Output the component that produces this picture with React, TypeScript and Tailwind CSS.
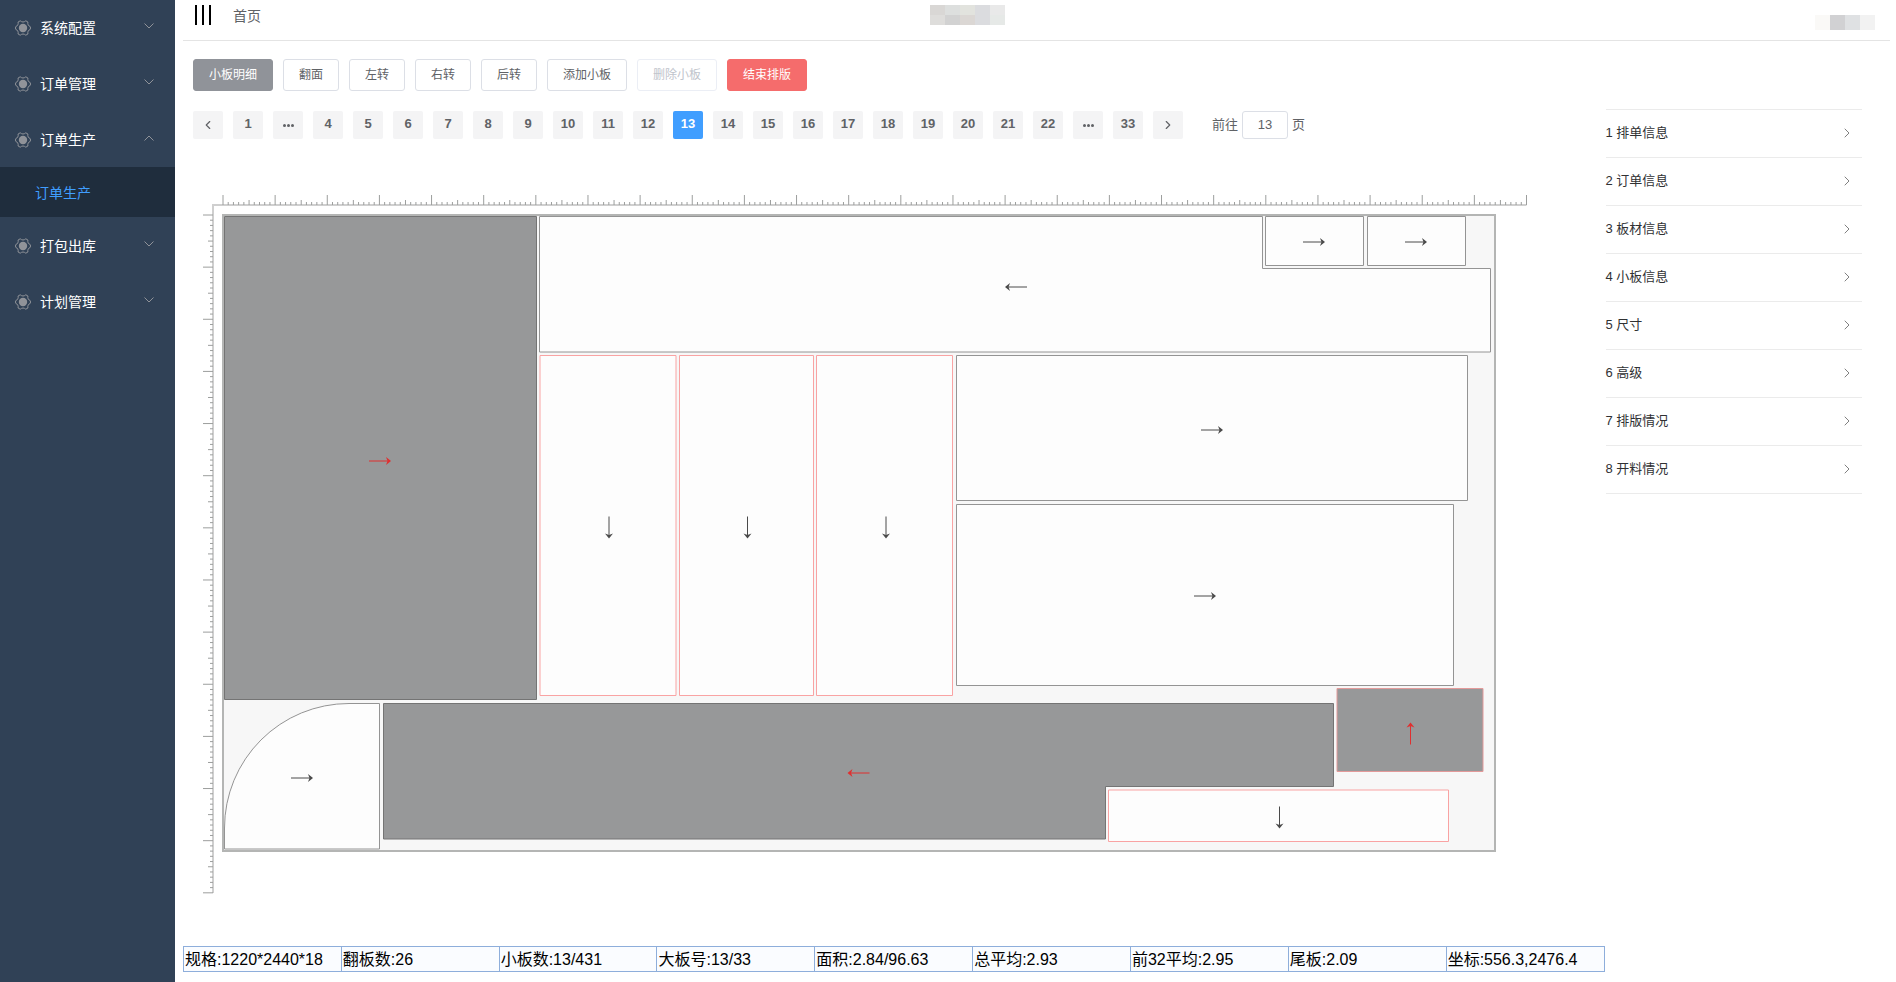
import React from 'react';
import { ChevronLeft, ChevronRight } from 'lucide-react';

const menus = [
  { name: '系统配置' },
  { name: '订单管理' },
  { name: '订单生产', open: true, children: ['订单生产'] },
  { name: '打包出库' },
  { name: '计划管理' },
];

const tools = [
  { name: '小板明细', style: 'bg-[#909399] border-[#909399] text-white' },
  { name: '翻面', style: 'bg-white border-[#dcdfe6] text-[#606266]' },
  { name: '左转', style: 'bg-white border-[#dcdfe6] text-[#606266]' },
  { name: '右转', style: 'bg-white border-[#dcdfe6] text-[#606266]' },
  { name: '后转', style: 'bg-white border-[#dcdfe6] text-[#606266]' },
  { name: '添加小板', style: 'bg-white border-[#dcdfe6] text-[#606266]' },
  { name: '删除小板', style: 'bg-white border-[#ebeef5] text-[#c0c4cc]', disabled: true },
  { name: '结束排版', style: 'bg-[#f56c6c] border-[#f56c6c] text-white' },
];

const pages = ['1', '...', '4', '5', '6', '7', '8', '9', '10', '11', '12', '13', '14', '15', '16', '17', '18', '19', '20', '21', '22', '...', '33'];

const sections = ['1 排单信息', '2 订单信息', '3 板材信息', '4 小板信息', '5 尺寸', '6 高级', '7 排版情况', '8 开料情况'];

const status = [
  '规格:1220*2440*18',
  '翻板数:26',
  '小板数:13/431',
  '大板号:13/33',
  '面积:2.84/96.63',
  '总平均:2.93',
  '前32平均:2.95',
  '尾板:2.09',
  '坐标:556.3,2476.4',
];

const titleTiles = [
  'bg-[#d9d7d5]', 'bg-[#dddfde]', 'bg-[#e2e3de]', 'bg-[#dbdcdf]', 'bg-[#e9e9e9]',
  'bg-[#dedddb]', 'bg-[#d2d2d2]', 'bg-[#dbd7d4]', 'bg-[#dbdcdf]', 'bg-[#e6e9e7]',
];
const userTiles = ['bg-[#faf9f7]', 'bg-[#d1d1d3]', 'bg-[#dfe1e3]', 'bg-[#f2f2f2]'];

type Kind = 'plain' | 'red' | 'dark' | 'darkRed';

const kinds: Record<Kind, { fill: string; stroke: string; arrow: string }> = {
  plain: { fill: '#fdfdfd', stroke: '#949494', arrow: '#4a4a4a' },
  red: { fill: '#fdfdfd', stroke: '#f9a3a3', arrow: '#4a4a4a' },
  dark: { fill: '#979899', stroke: '#747474', arrow: '#e02f2f' },
  darkRed: { fill: '#979899', stroke: '#e39a9a', arrow: '#e02f2f' },
};

// d: outline, x / y: middle of the arrow, turn: its direction in degrees
const panels: { kind: Kind; d: string; x: number; y: number; turn: number }[] = [
  { kind: 'dark', d: 'M224.5 216.5H536.5V699.5H224.5Z', x: 380, y: 461, turn: 0 },
  { kind: 'plain', d: 'M539.5 216.5H1262.5V268.5H1490.5V352H539.5Z', x: 1016, y: 287, turn: 180 },
  { kind: 'plain', d: 'M1265.5 216.5H1363.5V265.5H1265.5Z', x: 1314, y: 242, turn: 0 },
  { kind: 'plain', d: 'M1367.5 216.5H1465.5V265.5H1367.5Z', x: 1416, y: 242, turn: 0 },
  { kind: 'red', d: 'M540 355.5H676V695.5H540Z', x: 609, y: 527.5, turn: 90 },
  { kind: 'red', d: 'M679.5 355.5H813.5V695.5H679.5Z', x: 747.5, y: 527.5, turn: 90 },
  { kind: 'red', d: 'M816.5 355.5H952.5V695.5H816.5Z', x: 886, y: 527.5, turn: 90 },
  { kind: 'plain', d: 'M956.5 355.5H1467.5V500.5H956.5Z', x: 1212, y: 430, turn: 0 },
  { kind: 'plain', d: 'M956.5 504.5H1453.5V685.5H956.5Z', x: 1205, y: 596, turn: 0 },
  { kind: 'darkRed', d: 'M1337 688.5H1483V771.5H1337Z', x: 1410.5, y: 733.5, turn: 270 },
  { kind: 'dark', d: 'M383.5 703.5H1333.5V786.5H1105.5V839H383.5Z', x: 858.5, y: 773, turn: 180 },
  { kind: 'plain', d: 'M379.5 703.5V849H224.5V828A124.5 124.5 0 0 1 349 703.5Z', x: 302, y: 778, turn: 0 },
  { kind: 'red', d: 'M1108.5 790H1448.5V841.5H1108.5Z', x: 1279.5, y: 817.5, turn: 90 },
];

const STEP = 5.214;
const tickSize = (i: number) => (i % 10 === 0 ? 10 : i % 5 === 0 ? 5 : 3);
const topTicks = Array.from({ length: 251 }, (_, i) => `M${(223 + i * STEP).toFixed(2)} 205v-${tickSize(i)}`).join('');
const leftTicks = Array.from({ length: 131 }, (_, i) => `M213 ${(215 + i * STEP).toFixed(2)}h-${tickSize(i)}`).join('');

const MenuIcon = () => (
  <svg viewBox="0 0 16 16" className="size-4 shrink-0" fill="none" stroke="#909399">
    <circle cx="8" cy="8" r="4.2" fill="#909399" stroke="none" />
    <path
      d="M5.2 .8Q6.6 2 8 2T10.8 .8L12.9 2Q12.6 3.8 13.2 4.9T15.4 6.8V9.2Q13.8 10 13.2 11.1T12.9 14L10.8 15.2Q9.4 14 8 14T5.2 15.2L3.1 14Q3.4 12.2 2.8 11.1T.6 9.2V6.8Q2.2 6 2.8 4.9T3.1 2Z"
      strokeLinejoin="round"
    />
  </svg>
);

const Fold = ({ open }: { open?: boolean }) => (
  <svg viewBox="0 0 12 12" className="size-3 shrink-0 mb-1" fill="none" stroke="#909399">
    <path d={open ? 'M1.5 8.5 6 4l4.5 4.5' : 'M1.5 3.5 6 8l4.5-4.5'} />
  </svg>
);

const Sidebar = () => (
  <nav className="w-[175px] shrink-0 bg-[#304156] text-sm text-white">
    <ul className="-mt-px">
      {menus.map((m) => (
        <li key={m.name}>
          <button className="w-full h-14 pt-0.5 pl-[15px] pr-5 flex items-center">
            <MenuIcon />
            <span className="ml-[9px] flex-1 text-left">{m.name}</span>
            <Fold open={m.open} />
          </button>
          {m.children?.map((c) => (
            <a key={c} href="#" className="h-[50px] pt-0.5 pl-[35px] flex items-center bg-[#1f2d3d] text-[#409eff]">
              {c}
            </a>
          ))}
        </li>
      ))}
    </ul>
  </nav>
);

const Header = () => (
  <header className="h-[41px] border-b border-[#e4e4e4] flex justify-between">
    <div className="flex-1 flex items-start pt-[5px]">
      <button aria-label="menu" className="ml-3 w-4 h-5 flex justify-between">
        <span className="w-0.5 h-5 bg-black" />
        <span className="w-0.5 h-5 bg-black" />
        <span className="w-0.5 h-5 bg-black" />
      </button>
      <a href="#" className="ml-[22px] pt-px text-sm text-[#606266]">首页</a>
    </div>
    <div className="w-[75px] h-5 mt-[5px] mr-[124px] grid grid-cols-5">
      {titleTiles.map((t, i) => <div key={i} className={t} />)}
    </div>
    <div className="flex-1 flex justify-end pt-[15px] pr-[15px]">
      {userTiles.map((t, i) => <div key={i} className={`size-[15px] ${t}`} />)}
    </div>
  </header>
);

const Pager = () => (
  <div className="mt-5 flex items-center gap-2.5 text-[13px] text-[#606266]">
    <button aria-label="prev" className="w-[30px] h-7 rounded-xs bg-[#f4f4f5] flex items-center justify-center">
      <ChevronLeft size={14} />
    </button>
    {pages.map((p, i) =>
      p === '...' ? (
        <button key={i} aria-label="more" className="w-[30px] h-7 rounded-xs bg-[#f4f4f5] flex items-center justify-center gap-px">
          <i className="size-[3px] rounded-full bg-[#606266]" />
          <i className="size-[3px] rounded-full bg-[#606266]" />
          <i className="size-[3px] rounded-full bg-[#606266]" />
        </button>
      ) : (
        <button
          key={i}
          className={`w-[30px] h-7 pb-0.5 rounded-xs font-bold ${p === '13' ? 'bg-[#409eff] text-white' : 'bg-[#f4f4f5]'}`}
        >
          {p}
        </button>
      )
    )}
    <button aria-label="next" className="w-[30px] h-7 rounded-xs bg-[#f4f4f5] flex items-center justify-center">
      <ChevronRight size={14} />
    </button>
    <label className="ml-[19px] flex items-center gap-1">
      前往
      <input defaultValue="13" className="w-[46px] h-7 pb-px rounded-[3px] border border-[#dcdfe6] text-center outline-none" />
      页
    </label>
  </div>
);

const Board = () => (
  <svg viewBox="193 190 1340 710" className="mt-[51px] w-[1340px] h-[710px] shrink-0">
    <g fill="none" stroke="#9c9e9d">
      <path d="M213 893V205H1526.5" stroke="#cfcfcf" strokeWidth="2" />
      <path d={topTicks} />
      <path d={leftTicks} />
    </g>
    <rect x="223" y="215" width="1272" height="636" fill="#f7f7f7" stroke="#b4b5b4" strokeWidth="2" />
    {panels.map((p) => (
      <g key={p.d}>
        <path d={p.d} fill={kinds[p.kind].fill} stroke={kinds[p.kind].stroke} />
        <g transform={`translate(${p.x} ${p.y}) rotate(${p.turn})`}>
          <path d="M-11 0H8" fill="none" stroke={kinds[p.kind].arrow} />
          <path d="M11 0 6 -4 7.5 0 6 4Z" fill={kinds[p.kind].arrow} />
        </g>
      </g>
    ))}
  </svg>
);

const App: React.FC = () => {
  return (
    <div className="min-h-screen flex bg-white font-['Liberation_Sans','Noto_Sans_CJK_SC',sans-serif]">
      <Sidebar />
      <div className="flex-1 min-w-0 pl-2 pr-1.5">
        <Header />
        <main className="grid grid-cols-6">
          <div className="col-span-5 min-w-0">
            <div className="pl-2.5">
              {/* Toolbar */}
              <div className="pt-[18px] flex gap-2.5">
                {tools.map((t) => (
                  <button key={t.name} disabled={t.disabled} className={`h-8 px-[15px] border rounded-[3px] text-xs ${t.style}`}>
                    {t.name}
                  </button>
                ))}
              </div>
              <Pager />
              <Board />
            </div>

            {/* Status bar */}
            <div className="pt-[46px] pr-px">
              <table className="w-full table-fixed border-collapse bg-[#fafcff] text-base/[22px] text-black">
                <tbody>
                  <tr>
                    {status.map((s) => (
                      <td key={s} className="border border-[#8eaedb] pt-0.5 pl-px whitespace-nowrap">{s}</td>
                    ))}
                  </tr>
                </tbody>
              </table>
            </div>
          </div>

          {/* Info sections */}
          <div className="pt-[68px] pr-7">
            <div className="border-t border-[#ebebeb]">
              {sections.map((s) => (
                <button key={s} className="w-full h-12 pb-px pr-[7px] border-b border-[#ebebeb] flex items-center justify-between text-[13px] text-[#303133]">
                  {s}
                  <ChevronRight size={16} strokeWidth={1.5} className="text-[#808080]" />
                </button>
              ))}
            </div>
          </div>
        </main>
      </div>
    </div>
  );
};

export default App;
